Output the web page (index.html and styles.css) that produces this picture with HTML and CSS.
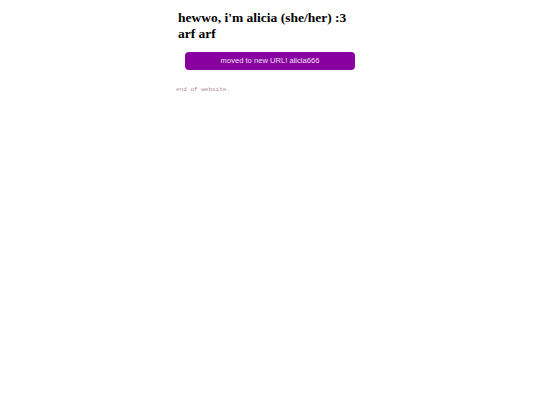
FILE: index.html
```html
<!DOCTYPE html>
<html>
<head>
<meta charset="utf-8">
<link rel="stylesheet" href="styles.css">
</head>
<body>
<div class="page">
  <h1 class="title">hewwo, i'm alicia (she/her) :3 arf arf</h1>
  <a class="btn" href="#">moved to new URL! alicia666</a>
  <p class="end">end of website.</p>
</div>
</body>
</html>
```
FILE: styles.css
```css
html, body {
  margin: 0;
  padding: 0;
  background: #ffffff;
}
.page {
  width: 184px;
  margin: 0 auto;
  padding-top: 10px;
  display: flex;
  flex-direction: column;
}
.title {
  font-family: "Liberation Serif", "Times New Roman", serif;
  font-weight: bold;
  font-size: 13.5px;
  line-height: 16px;
  margin: 0 0 10px 0;
  color: #000;
}
.btn {
  align-self: center;
  width: 170px;
  height: 18px;
  line-height: 18px;
  border-radius: 4px;
  background: #8800a0;
  color: #f0e0f4;
  text-align: center;
  font-family: "Liberation Sans", Arial, sans-serif;
  font-size: 7.6px;
  text-decoration: none;
}
.end {
  font-family: "Liberation Mono", "Courier New", monospace;
  font-size: 6px;
  color: #b08a9c;
  margin: 16px 0 0 -2px;
}
```
